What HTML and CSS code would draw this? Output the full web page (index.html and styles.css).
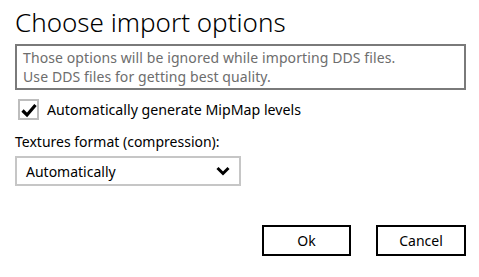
FILE: index.html
```html
<!DOCTYPE html>
<html lang="en">
<head>
	<meta charset="UTF-8">
	<title>Choose import options</title>
	<link rel="stylesheet" href="styles.css">
</head>
<body>
	<div class="dialog">
		<h1 class="title">Choose import options</h1>
		<div class="note">
			Those options will be ignored while importing DDS files.<br>
			Use DDS files for getting best quality.
		</div>
		<label class="check">
			<span class="box">
				<svg width="16" height="16" viewBox="0 0 16 16"><path d="M1.5 8.5 L6 13 L14.5 3" fill="none" stroke="#000" stroke-width="3.2"/></svg>
			</span>
			Automatically generate MipMap levels
		</label>
		<div class="field-label">Textures format (compression):</div>
		<div class="select">
			<span>Automatically</span>
			<svg width="14" height="10" viewBox="0 0 14 10"><path d="M1.5 2 L7 7.5 L12.5 2" fill="none" stroke="#000" stroke-width="3"/></svg>
		</div>
		<div class="buttons">
			<div class="btn">Ok</div>
			<div class="btn">Cancel</div>
		</div>
	</div>
</body>
</html>
```
FILE: styles.css
```css
html,body{margin: 0;padding: 0;background: #fff;}
body{font-family: "Noto Sans", "Open Sans", sans-serif;font-size: 14px;color: #000;}
.dialog{width: 451px;padding: 4px 13px 0 15px;}
.title{font-size: 26px;font-weight: 300;margin: 0;line-height: 36px;height: 40px;}
.note{border: 2px solid #7a7a7a;color: #6d6d6d;padding: 2px 6px;line-height: 19px;height: 38px;font-size: 14px;letter-spacing: 0.1px;}
.check{display: flex;align-items: center;gap: 8px;margin: 9px 0 0 3px;height: 21px;line-height: 21px;font-size: 14.2px;}
.box{width: 17px;height: 17px;border: 2px solid #bdbdbd;display: flex;align-items: center;justify-content: center;}
.field-label{margin-top: 12px;line-height: 20px;}
.select{border: 2px solid #c6c6c6;margin-top: 4px;display: flex;align-items: center;justify-content: space-between;box-sizing: border-box;width: 226px;height: 30px;padding: 0 9px;}
.buttons{display: flex;justify-content: flex-end;gap: 25px;margin-top: 39px;}
.btn{width: 85px;height: 27px;border: 2px solid #000;display: flex;align-items: center;justify-content: center;}
.btn + .btn{width: 86px;}
```
